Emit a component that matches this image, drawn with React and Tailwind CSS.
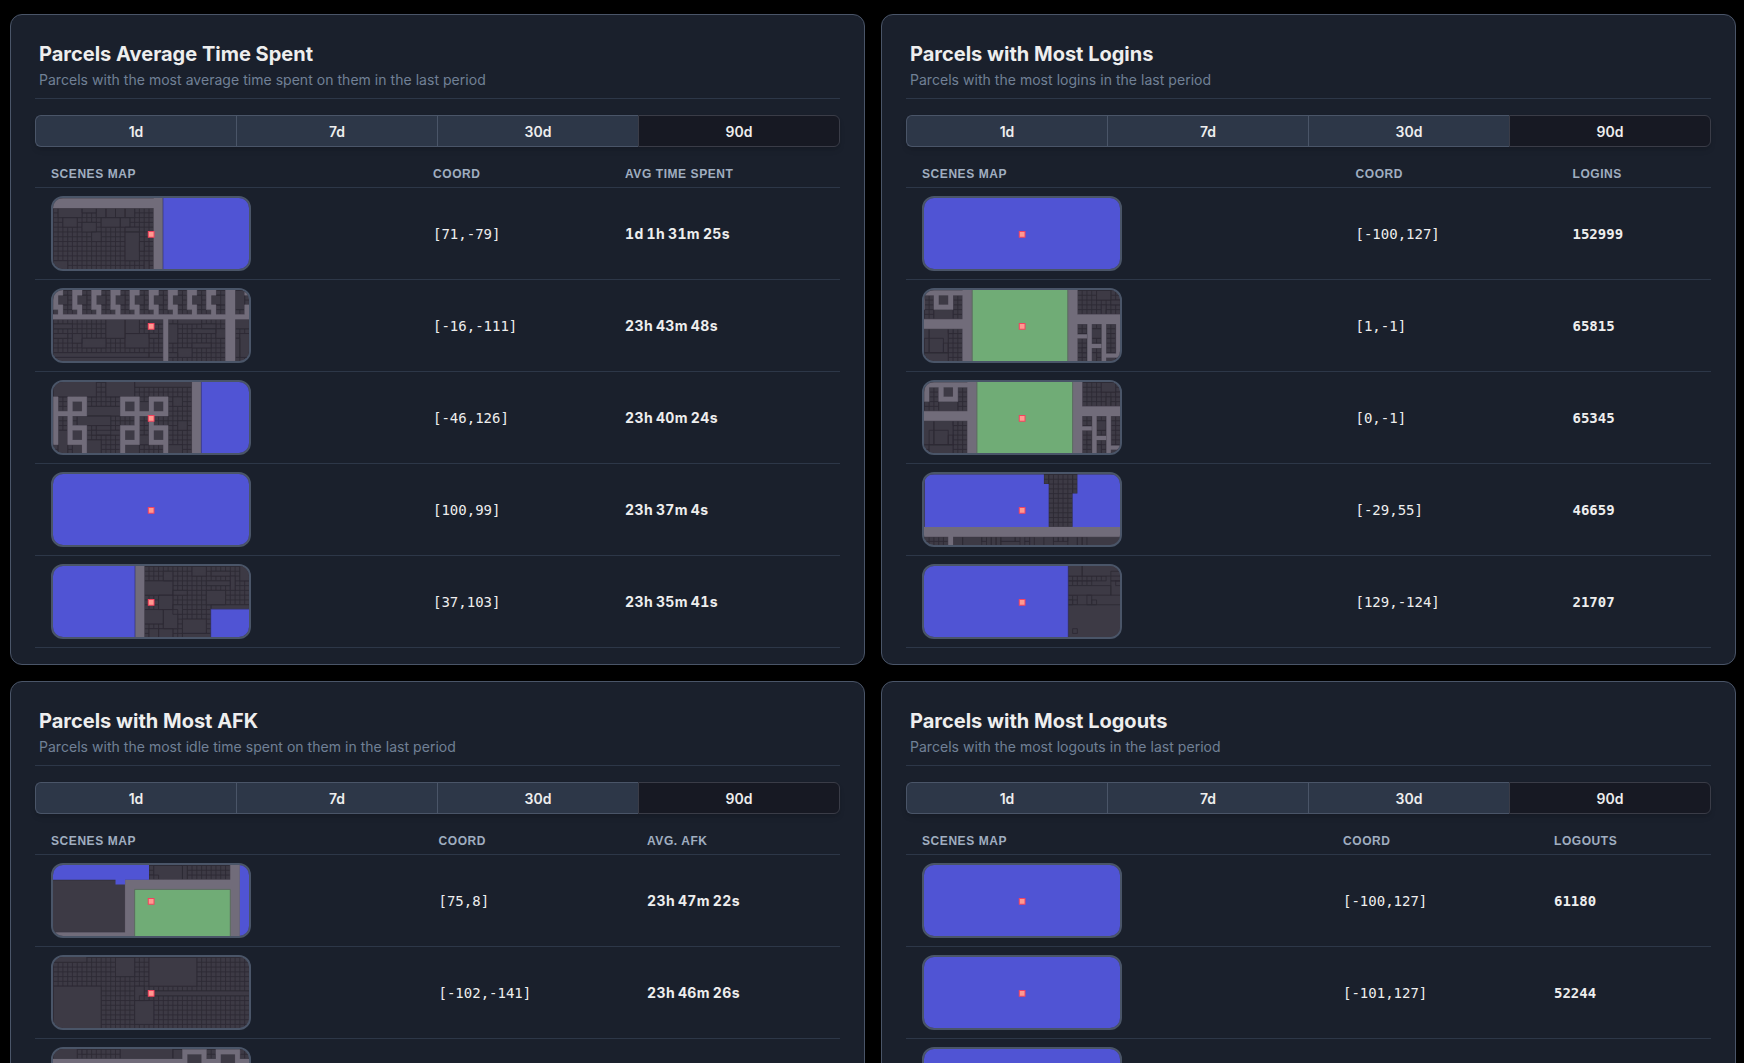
import React from "react";

// Scene maps are described in parcels, with the highlighted parcel at [0, 0].
// Every rectangle is [x, y, width, height].
const hooks = [-20, -16, -12, -8, -4, 0, 4, 8, 12];
const ring = (x, y) => [
  [x, y, 4, 1], [x, y + 3, 4, 1], [x, y + 1, 1, 2], [x + 3, y + 1, 1, 2],
];
const shift = (list, d) => list.map(([x, y, w, h]) => [x + d, y, w, h]);

const plaza = (d) => ({
  grid: [[-22, -8, 43, 16]],
  estates: shift([
    [-17, -6, 2, 2], [-18, -3, 4, 2], [-22, 1, 3, 5], [-19, 1, 4, 5], [-20, 3, 4, 3], [-20, 6, 5, 2], [-16, 4, 1, 2], [-15, 1, 1, 1],
    [16, -7, 3, 2], [19, -5, 2, 1], [17, -4, 1, 2], [18, -3, 1, 1], [15, 1, 2, 2], [13, 5, 1, 1], [15, 6, 1, 2], [18, 7, 2, 1],
  ], d),
  roads: shift([
    [-12, -8, 2, 16], [10, -8, 2, 16], [-22, -1, 10, 2], [-22, -7, 10, 1],
    [-18, -6, 1, 3], [-15, -6, 1, 3], [-17, -4, 2, 1], [-21, -6, 1, 3],
    [12, -2, 10, 2], [14.1, 0, 0.9, 8], [17.1, 0, 0.9, 8], [20.1, 0, 0.9, 7], [12, 2.2, 2, 0.8], [15, 4.2, 2, 0.8], [18, 6.2, 3, 0.8],
  ], d),
  green: shift([[-10, -8, 20, 16]], d),
});

const scenes = {
  sea: { water: [[-21, -8, 43, 16]] },
  coast: {
    grid: [[-20, -5, 21, 13]],
    estates: [
      [-19, -5, 5, 2], [-14, -5, 3, 1], [-11, -5, 2, 2], [-9, -5, 2, 2], [-7, -5, 2, 2], [-5, -5, 2, 2],
      [-18, -3, 3, 2], [-14, -2, 3, 2], [-10, -3, 4, 2], [-6, -3, 2, 2], [-5, -1, 3, 1], [-12, 0, 2, 2],
      [-5, 0, 3, 6], [-2, 2, 1, 2], [-20, 6, 3, 2], [-1, 6, 1, 2],
    ],
    roads: [[-21, -7, 22, 2], [1, -8, 2, 16]],
    water: [[3, -8, 19, 16]],
  },
  hooks: {
    grid: [[-20, -7, 41, 15]],
    estates: [
      ...hooks.map((k) => [k + 1, -6, 2, 2]),
      [-9, -1, 4, 4], [-5, -1, 3, 3], [-5, 2, 5, 3], [-14, 3, 5, 2], [-16, 2, 2, 2], [0, -1, 3, 1], [-20, 6, 20, 1], [-20, 7, 23, 1],
      [0, 6, 6, 1], [4, 0, 2, 4], [6, -1, 5, 1], [6, 5, 3, 2], [11, 0, 3, 1], [9, 1, 5, 1], [14, 1, 2, 2], [9, 4, 4, 1], [13, -6, 3, 2],
      [18, -7, 2, 4], [18, -1, 3, 2], [18, 3, 1, 4], [19, 2, 2, 5], [0, 2, 2, 1], [-20, 0, 4, 1], [-20, 2, 3, 1],
    ],
    roads: [
      [-21, -2, 43, 1], [16, -8, 2, 16], [3, -1, 1, 9], [20, -4, 1, 2], [20, -8, 1, 2],
      ...hooks.flatMap((k) => [[k, -8, 2, 2], [k, -7, 1, 4], [k, -4, 2, 1], [k + 1, -3, 1, 1]]),
    ],
  },
  rings: {
    grid: [[-20, -7, 29, 15]],
    estates: [
      [-20, -8, 9, 4], [-9, -8, 6, 4], [-3, -8, 12, 2], [-13, -2, 7, 2], [-15, 0, 7, 2], [-16, -3, 2, 2], [-5, -3, 2, 2], [1, -3, 2, 2],
      [-16, 3, 2, 2], [-5, 3, 2, 2], [1, 3, 2, 2], [-19, 3, 2, 5], [-16, 6, 2, 2], [-13, 5, 3, 3], [-12, 3, 6, 1], [-11, 2, 3, 2],
      [5, -4, 2, 2], [6, 1, 2, 2], [4, 6, 3, 2], [-5, 6, 3, 2], [-2, 4, 2, 2], [-2, -3, 2, 2],
    ],
    roads: [
      [-20, -4, 1, 10], [-19, -1, 2, 1], [-2, -1, 2, 1], [-17, 0, 1, 2], [-3, 0, 1, 2], [0, 0, 1, 2],
      [-14, 6, 1, 2], [-6, 6, 1, 2], [3, 6, 1, 2], [9, -8, 2, 16],
      ...ring(-17, -4), ...ring(-6, -4), ...ring(0, -4), ...ring(-17, 2), ...ring(-6, 2), ...ring(0, 2),
    ],
    water: [[11, -8, 11, 16]],
  },
  shore: {
    grid: [[-1, -8, 23, 16]],
    estates: [
      [-1, -4, 6, 3], [2, -1, 3, 3], [3, -6, 2, 2], [-1, 2, 4, 3], [3, 2, 3, 4], [0, 6, 2, 2], [2, 6, 3, 2], [7, 4, 5, 3], [12, -2, 4, 3],
      [5, 1, 2, 2], [9, -7, 3, 2], [12, -4, 5, 1], [13, -6, 4, 1], [19, -8, 2, 4], [13, 1, 8, 1], [5, -2, 3, 1], [7, 7, 6, 1], [17, -5, 1, 3],
    ],
    roads: [[-3, -8, 2, 16]],
    water: [[-21, -8, 18, 16], [13, 2, 9, 6]],
  },
  plazaEast: plaza(0),
  plazaWest: plaza(1),
  pier: {
    grid: [[6, -7, 5, 11], [5, -7, 1, 2], [11, -7, 1, 4], [-20, 6, 5, 2]],
    estates: [
      [-14, 6, 2, 2], [-12, 6, 4, 2], [-8, 6, 1, 1], [-7, 6, 1, 2], [-6, 6, 1, 2], [-5, 6, 1, 2], [-4, 6, 3, 1], [-4, 7, 4, 1], [-1, 6, 1, 1],
      [1, 6, 1, 1], [1, 7, 1, 1], [2, 6, 1, 2], [5, 6, 2, 2], [7, 6, 1, 1], [8, 6, 1, 1], [9, 6, 1, 1], [10, 6, 2, 2], [12, 6, 1, 2], [13, 6, 1, 2],
    ],
    roads: [[-21, 4, 43, 2], [-15, 6, 1, 2]],
    water: [[-19.9, -7, 24.9, 2], [-19.9, -5, 25.9, 9], [12, -7, 10, 4], [11, -3, 11, 7]],
    seamless: true,
  },
  cape: {
    grid: [[10, -5, 8, 1], [10, -4, 5, 1], [10, -1, 2, 2]],
    estates: [[10, -8, 3, 3], [13, -8, 9, 3], [19, -6, 2, 2], [10, -3, 9, 2], [19, -4, 3, 3], [20, -4, 2, 1], [10, 0, 1, 1], [14, -1, 1, 2], [15, 0, 1, 1], [10, 1, 12, 7], [11, 6, 1, 1]],
    water: [[-21, -8, 31, 16]],
  },
  park: {
    grid: [[0, -7, 17, 3]],
    estates: [[-21, -4, 16, 11], [1, -7, 6, 3], [0, -5, 2, 1], [7, -7, 1, 3]],
    roads: [[-21, 7, 16, 1], [-5, -4, 2, 12], [-3, -4, 22, 2], [17, -8, 2, 16]],
    water: [[-21, -8, 21, 4], [-7, -4, 2, 1], [19, -8, 3, 16]],
    green: [[-3, -2, 20, 10]],
    seamless: true,
  },
  fields: {
    grid: [[-20, -7, 41, 15]],
    estates: [[-20, -8, 7, 2], [-7, -7, 4, 4], [0, -7, 10, 6], [-20, -1, 10, 9], [-3, -1, 2, 3], [-3, 2, 4, 5], [-2, 1, 2, 1], [0, 0, 21, 1]],
  },
  avenue: {
    grid: [[-20, -8, 41, 16]],
    estates: [[-20, -8, 5, 3], [-14, -7, 1, 1], [-6, -8, 11, 3], [5, -7, 2, 2], [8, -6, 3, 3], [15, -6, 3, 3]],
    roads: [[-21, -5, 28, 2], [7, -7, 5, 1], [7, -7, 1, 4], [11, -7, 1, 4], [12, -5, 2, 1], [14, -7, 5, 1], [14, -7, 1, 4], [18, -7, 1, 4], [19, -5, 3, 2]],
  },
};

const rectPath = (list = []) => list.map(([x, y, w, h]) => `M${x} ${y}h${w}v${h}h${-w}z`).join("");

const gridPath = (list = []) =>
  list
    .map(([x, y, w, h]) => {
      let d = "";
      for (let i = 0; i <= w; i++) d += `M${x + i} ${y}v${h}`;
      for (let j = 0; j <= h; j++) d += `M${x} ${y + j}h${w}`;
      return d;
    })
    .join("");

function SceneMap({ scene }) {
  const s = scenes[scene];
  return (
    <div className="h-[75px] w-[200px] overflow-hidden rounded-xl border-2 border-[#4a5568] bg-[#3d3a45]">
      <svg viewBox="-20.07 -7.1 40.98 14.84" preserveAspectRatio="none" className="block h-full w-full">
        <path d={gridPath(s.grid)} fill="none" stroke="#2d2a34" strokeWidth="0.18" />
        <path d={rectPath(s.estates)} fill="#3d3a45" stroke="#2d2a34" strokeWidth="0.18" />
        <path d={rectPath(s.roads)} fill="none" stroke="#4f4b57" strokeWidth="0.2" />
        <path d={rectPath(s.roads)} fill="#716c7a" />
        <path d={rectPath(s.green)} fill="#70ac76" stroke="#5c6b61" strokeWidth="0.2" />
        {!s.seamless && <path d={rectPath(s.water)} fill="none" stroke="#37366f" strokeWidth="0.3" />}
        <path d={rectPath(s.water)} fill="#5054d4" />
        <rect x="-0.15" y="-0.1" width="1.2" height="1.2" fill="#ff9990" stroke="#f5405e" strokeWidth="0.2" />
      </svg>
    </div>
  );
}

const cards = [
  {
    title: "Parcels Average Time Spent",
    text: "Parcels with the most average time spent on them in the last period",
    metric: "Avg Time Spent",
    cols: "grid-cols-[382px_192px_1fr]",
    rows: [
      ["coast", "[71,-79]", "1d 1h 31m 25s"],
      ["hooks", "[-16,-111]", "23h 43m 48s"],
      ["rings", "[-46,126]", "23h 40m 24s"],
      ["sea", "[100,99]", "23h 37m 4s"],
      ["shore", "[37,103]", "23h 35m 41s"],
    ],
  },
  {
    title: "Parcels with Most Logins",
    text: "Parcels with the most logins in the last period",
    metric: "Logins",
    mono: true,
    cols: "grid-cols-[433.5px_217px_1fr]",
    rows: [
      ["sea", "[-100,127]", "152999"],
      ["plazaEast", "[1,-1]", "65815"],
      ["plazaWest", "[0,-1]", "65345"],
      ["pier", "[-29,55]", "46659"],
      ["cape", "[129,-124]", "21707"],
    ],
  },
  {
    title: "Parcels with Most AFK",
    text: "Parcels with the most idle time spent on them in the last period",
    metric: "Avg. AFK",
    cols: "grid-cols-[387.5px_208.5px_1fr]",
    rows: [
      ["park", "[75,8]", "23h 47m 22s"],
      ["fields", "[-102,-141]", "23h 46m 26s"],
      ["avenue", "", ""],
    ],
  },
  {
    title: "Parcels with Most Logouts",
    text: "Parcels with the most logouts in the last period",
    metric: "Logouts",
    mono: true,
    cols: "grid-cols-[421px_211px_1fr]",
    rows: [
      ["sea", "[-100,127]", "61180"],
      ["sea", "[-101,127]", "52244"],
      ["sea", "", ""],
    ],
  },
];

function Tabs() {
  return (
    <div className="mt-4 grid h-8 grid-cols-[201px_201px_201px_1fr] rounded-md text-sm font-semibold text-[#eeeeee] shadow-md">
      {["1d", "7d", "30d"].map((t) => (
        <button key={t} className="border border-r-0 border-[#4a5568] bg-[#2d3748] pt-px first:rounded-l-md">
          {t}
        </button>
      ))}
      <button className="rounded-r-md border border-[#3a3c47] bg-[#171923] pt-px">90d</button>
    </div>
  );
}

function Card({ card }) {
  return (
    <section className="h-[651px] rounded-xl border border-[#4a5568] bg-[#1a202c] px-6 pt-6">
      <header className="h-[60px] border-b border-[#2d3748] px-1">
        <h2 className="text-xl leading-[30px] font-bold text-[#eeeeee]">{card.title}</h2>
        <p className="text-sm leading-[22px] tracking-[0.034px] text-[#718096]">{card.text}</p>
      </header>
      <Tabs />
      <div className={`grid ${card.cols} h-[41px] items-end border-b border-[#2d3748] px-4 pb-[5px] text-xs leading-4 font-bold tracking-[0.57px] text-[#a0aec0] uppercase font-['Liberation_Sans',sans-serif]`}>
        <span>Scenes Map</span>
        <span>Coord</span>
        <span>{card.metric}</span>
      </div>
      {card.rows.map(([scene, coord, value], i) => (
        <div key={i} className={`grid ${card.cols} h-[92px] items-center border-b border-[#2d3748] px-4 text-sm text-[#eeeeee]`}>
          <SceneMap scene={scene} />
          <span className="font-['DejaVu_Sans_Mono',monospace]">{coord}</span>
          <span className={card.mono ? "font-bold font-['DejaVu_Sans_Mono',monospace]" : "font-bold tracking-[0.4px] tabular-nums [word-spacing:-1.3px]"}>{value}</span>
        </div>
      ))}
    </section>
  );
}

export default function App() {
  return (
    <main className="h-[1063px] overflow-hidden bg-black pt-[14px] pr-2 pl-[10px] font-['Inter',sans-serif]">
      <div className="grid grid-cols-2 gap-4">
        {cards.map((c) => (
          <Card key={c.title} card={c} />
        ))}
      </div>
    </main>
  );
}
